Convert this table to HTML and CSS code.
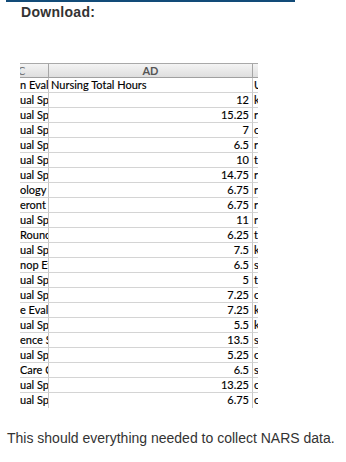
FILE: index.html
```html
<!DOCTYPE html>
<html>
<head>
<meta charset="utf-8">
<link rel="stylesheet" href="styles.css">
</head>
<body>
<div class="rule"></div>
<h3 class="title">Download:</h3>
<div class="sheet">
  <div class="hd c-left"><span class="clipc">C</span></div>
  <div class="hd c-mid">AD</div>
  <div class="hd c-right"></div>

  <div class="cl">n Evalu</div><div class="cm lft">Nursing Total Hours</div><div class="cr">U</div>
  <div class="cl">ual Sp</div><div class="cm">12</div><div class="cr">k</div>
  <div class="cl">ual Sp</div><div class="cm">15.25</div><div class="cr">r</div>
  <div class="cl">ual Sp</div><div class="cm">7</div><div class="cr">c</div>
  <div class="cl">ual Sp</div><div class="cm">6.5</div><div class="cr">r</div>
  <div class="cl">ual Sp</div><div class="cm">10</div><div class="cr">t</div>
  <div class="cl">ual Sp</div><div class="cm">14.75</div><div class="cr">r</div>
  <div class="cl">ology</div><div class="cm">6.75</div><div class="cr">r</div>
  <div class="cl">eront</div><div class="cm">6.75</div><div class="cr">r</div>
  <div class="cl">ual Sp</div><div class="cm">11</div><div class="cr">r</div>
  <div class="cl">Rounc</div><div class="cm">6.25</div><div class="cr">t</div>
  <div class="cl">ual Sp</div><div class="cm">7.5</div><div class="cr">k</div>
  <div class="cl">nop Ev</div><div class="cm">6.5</div><div class="cr">s</div>
  <div class="cl">ual Sp</div><div class="cm">5</div><div class="cr">t</div>
  <div class="cl">ual Sp</div><div class="cm">7.25</div><div class="cr">c</div>
  <div class="cl">e Evalu</div><div class="cm">7.25</div><div class="cr">k</div>
  <div class="cl">ual Sp</div><div class="cm">5.5</div><div class="cr">k</div>
  <div class="cl">ence S</div><div class="cm">13.5</div><div class="cr">s</div>
  <div class="cl">ual Sp</div><div class="cm">5.25</div><div class="cr">c</div>
  <div class="cl">Care C</div><div class="cm">6.5</div><div class="cr">s</div>
  <div class="cl">ual Sp</div><div class="cm">13.25</div><div class="cr">c</div>
  <div class="cl last">ual Sp</div><div class="cm last">6.75</div><div class="cr last">c</div>
</div>
<p class="note">This should everything needed to collect NARS data.</p>
</body>
</html>
```

FILE: styles.css
```css
html, body {
  margin: 0;
  padding: 0;
  background: #fff;
}
body {
  font-family: "Liberation Sans", Arial, sans-serif;
  color: #333;
}
.rule {
  margin-left: 6px;
  width: 289px;
  height: 2px;
  background: #124b78;
}
.title {
  margin: 2px 0 0 21px;
  font-size: 14px;
  line-height: 16px;
  font-weight: bold;
  color: #333;
  letter-spacing: 0.3px;
}
.sheet {
  margin: 43px 0 0 20px;
  width: 238px;
  display: grid;
  grid-template-columns: 29px 204px 5px;
  grid-auto-rows: 15px;
  font-family: Lato, "Open Sans", sans-serif;
  font-size: 11px;
  line-height: 14px;
  color: #000;
  -webkit-text-stroke: 0.15px #000;
}
.sheet > div {
  overflow: hidden;
  white-space: nowrap;
  box-sizing: border-box;
  border-bottom: 1px solid #d4d4d4;
}
.sheet > div.last {
  border-bottom: none;
}
.hd {
  background: linear-gradient(#f4f4f4, #dedede);
  border-top: 1px solid #a9a9a9;
  border-bottom: 1px solid #a0a0a0 !important;
  font-weight: bold;
  color: #555;
  font-size: 11px;
  line-height: 13px;
  -webkit-text-stroke: 0;
}
.c-left {
  border-right: 1px solid #a6a6a6;
}
.clipc {
  display: inline-block;
  margin-left: -2px;
  font-weight: normal;
  color: #777;
}
.c-mid {
  text-align: center;
  border-right: 1px solid #a6a6a6;
}
.cl {
  border-right: 1px solid #c8c8c8;
}
.cm {
  text-align: right;
  padding-right: 3px;
  border-right: 1px solid #c8c8c8;
}
.cm.lft {
  text-align: left;
  padding-left: 2px;
}
.cr {
  padding-left: 1px;
}
.note {
  margin: 22px 0 0 7px;
  font-size: 14px;
  line-height: 16px;
  color: #333;
}
```
